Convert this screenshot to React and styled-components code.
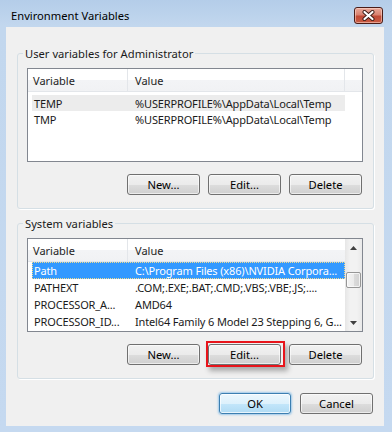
import React from "react";
import styled, { createGlobalStyle } from "styled-components";

const FONT = `"Noto Sans", "Open Sans", sans-serif`;

const Global = createGlobalStyle`
  html, body { margin: 0; padding: 0; background: #c4d9f0; }
  body { font-family: ${FONT}; font-size: 11px; color: #1a1a1a; }
  * { box-sizing: border-box; }
`;

const Frame = styled.div`
  width: 392px;
  height: 432px;
  display: flex;
  flex-direction: column;
  background: linear-gradient(180deg, #b4cde9 0px, #c2d7ee 26px, #c5d9f0 100%);
  overflow: hidden;
`;

const TitleBar = styled.div`
  height: 27px;
  flex: none;
  display: flex;
  align-items: center;
  justify-content: space-between;
  padding: 4px 9px 0 11px;
`;

const Title = styled.div`
  font-size: 11.2px;
  color: #000;
`;

const CloseButton = styled.div`
  width: 29px;
  height: 17px;
  border: 1px solid #4a1d18;
  border-radius: 3px;
  background: linear-gradient(180deg, #e9a99a 0%, #d98270 45%, #c14a36 55%, #c95d45 100%);
  box-shadow: inset 0 0 0 1px rgba(255, 220, 210, 0.55);
  display: flex;
  align-items: center;
  justify-content: center;
`;

const Client = styled.div`
  flex: 1;
  margin: 0 8px 6px 6px;
  background: #f0f0f0;
  padding: 0 10px 0 11px;
  display: flex;
  flex-direction: column;
`;

const Group = styled.fieldset`
  margin: ${(p) => p.$top}px 0 0;
  padding: 0;
  min-width: 0;
  border: 1px solid #d5dfe5;
  border-radius: 3px;
  box-shadow: 1px 1px 0 #fff;
`;

const Legend = styled.legend`
  margin-left: 5px;
  padding: 0 2px;
  line-height: 15px;
  font-size: 11.2px;
  color: #1a1a1a;
`;

const GroupBody = styled.div`
  padding: 7px 10px 13px 9px;
  display: flex;
  flex-direction: column;
`;

const List = styled.div`
  height: 94px;
  border: 1px solid #828790;
  background: #fff;
  display: flex;
  overflow: hidden;
`;

const ListMain = styled.div`
  flex: 1;
  display: flex;
  flex-direction: column;
  min-width: 0;
`;

const HeaderRow = styled.div`
  height: 23px;
  flex: none;
  display: flex;
  background: linear-gradient(180deg, #ffffff 0%, #ffffff 48%, #f3f4f6 52%, #f1f2f4 100%);
  border-bottom: 1px solid #e3e6ea;
`;

const HeaderCell = styled.div`
  width: ${(p) => (p.$w ? `${p.$w}px` : "auto")};
  flex: ${(p) => (p.$w ? "none" : "1")};
  padding-left: ${(p) => p.$pad || 0}px;
  border-right: ${(p) => (p.$last ? "none" : "1px solid #e3e6ea")};
  display: flex;
  align-items: center;
  font-size: 11px;
  color: #1e1e1e;
  white-space: nowrap;
`;

const Rows = styled.div`
  padding-top: ${(p) => p.$top}px;
  display: flex;
  flex-direction: column;
`;

const Row = styled.div`
  margin-left: 4px;
  width: 313px;
  height: ${(p) => p.$h}px;
  flex: none;
  display: flex;
  align-items: center;
  font-size: 11px;
  letter-spacing: -0.15px;
  color: ${(p) => (p.$state === "active" ? "#fff" : "#1a1a1a")};
  background: ${(p) =>
    p.$state === "active" ? "#3399ff" : p.$state === "inactive" ? "#ececec" : "transparent"};
  outline: ${(p) => (p.$state === "active" ? "1px dotted #f3dc8c" : "none")};
  outline-offset: -1px;
  white-space: nowrap;
`;

const Cell = styled.div`
  width: ${(p) => (p.$w ? `${p.$w}px` : "auto")};
  flex: ${(p) => (p.$w ? "none" : "1")};
  padding-left: ${(p) => p.$pad}px;
  overflow: hidden;
  white-space: nowrap;
`;

const ScrollBar = styled.div`
  width: 17px;
  flex: none;
  display: flex;
  flex-direction: column;
  background: linear-gradient(90deg, #e6e6e6 0%, #f2f2f2 30%, #f2f2f2 70%, #e9e9e9 100%);
`;

const ArrowButton = styled.div`
  height: 17px;
  flex: none;
  display: flex;
  align-items: center;
  justify-content: center;
`;

const Track = styled.div`
  flex: 1;
  display: flex;
  flex-direction: column;
  padding-top: ${(p) => p.$offset}px;
`;

const Thumb = styled.div`
  height: 16px;
  margin: 0 1px;
  border: 1px solid #979797;
  border-radius: 2px;
  background: linear-gradient(90deg, #f4f4f4 0%, #ececec 50%, #dcdcdc 51%, #d2d2d2 100%);
  box-shadow: inset 0 0 0 1px rgba(255, 255, 255, 0.7);
`;

const ButtonRow = styled.div`
  margin-top: ${(p) => p.$top}px;
  display: flex;
  justify-content: flex-end;
  gap: ${(p) => p.$gap}px;
  padding-right: 1px;
`;

const Button = styled.button`
  width: ${(p) => p.$w || 73}px;
  height: 21px;
  padding: 0;
  flex: none;
  border: 1px solid ${(p) => (p.$default ? "#3c7fb1" : "#707070")};
  border-radius: 3px;
  font-family: ${FONT};
  font-size: 11.2px;
  color: #000;
  background: ${(p) =>
    p.$default
      ? "linear-gradient(180deg, #ecf7fd 0%, #ddf1fc 50%, #c3e6fa 51%, #b0dbf4 100%)"
      : "linear-gradient(180deg, #f2f2f2 0%, #ebebeb 50%, #dddddd 51%, #cfcfcf 100%)"};
  box-shadow: ${(p) =>
    p.$default
      ? "inset 0 0 0 1px rgba(255,255,255,0.7), 0 0 2px 1px rgba(90,170,230,0.55)"
      : "inset 0 0 0 1px rgba(255,255,255,0.6)"};
`;

/* hand-drawn red annotation frame around a button */
const Highlight = styled.span`
  display: flex;
  margin: -3px -4px -2px -2px;
  padding: 1px 2px 0 0;
  border: 2px solid #e8141b;
  box-shadow: 3px 4px 5px rgba(0, 0, 0, 0.3);
`;

const Up = () => (
  <svg width="7" height="4" viewBox="0 0 7 4">
    <polygon points="0,4 7,4 3.5,0" fill="#404040" />
  </svg>
);
const Down = () => (
  <svg width="7" height="4" viewBox="0 0 7 4">
    <polygon points="0,0 7,0 3.5,4" fill="#404040" />
  </svg>
);

const CloseGlyph = () => (
  <svg width="13" height="11" viewBox="0 0 13 11">
    <path d="M2.5 2 L10.5 9 M10.5 2 L2.5 9" stroke="#3a1a14" strokeWidth="4" strokeLinecap="round" />
    <path d="M2.5 2 L10.5 9 M10.5 2 L2.5 9" stroke="#ffffff" strokeWidth="2.2" strokeLinecap="round" />
  </svg>
);

const userVars = [
  { name: "TEMP", value: "%USERPROFILE%\\AppData\\Local\\Temp", state: "inactive" },
  { name: "TMP", value: "%USERPROFILE%\\AppData\\Local\\Temp" },
];

const sysVars = [
  { name: "Path", value: "C:\\Program Files (x86)\\NVIDIA Corpora...", state: "active" },
  { name: "PATHEXT", value: ".COM;.EXE;.BAT;.CMD;.VBS;.VBE;.JS;...." },
  { name: "PROCESSOR_A...", value: "AMD64" },
  { name: "PROCESSOR_ID...", value: "Intel64 Family 6 Model 23 Stepping 6, G..." },
];

function VarList({ rows, rowHeight, rowTop, scroll }) {
  return (
    <List>
      <ListMain>
        <HeaderRow>
          <HeaderCell $w={100} $pad={5}>Variable</HeaderCell>
          <HeaderCell $w={217} $pad={7} $last={scroll}>Value</HeaderCell>
          {!scroll && <HeaderCell $last />}
        </HeaderRow>
        <Rows $top={rowTop}>
          {rows.map((r) => (
            <Row key={r.name} $h={rowHeight} $state={r.state}>
              <Cell $w={96} $pad={2}>{r.name}</Cell>
              <Cell $pad={7}>{r.value}</Cell>
            </Row>
          ))}
        </Rows>
      </ListMain>
      {scroll && (
        <ScrollBar>
          <ArrowButton><Up /></ArrowButton>
          <Track $offset={16}>
            <Thumb />
          </Track>
          <ArrowButton><Down /></ArrowButton>
        </ScrollBar>
      )}
    </List>
  );
}

export default function App() {
  return (
    <>
      <Global />
      <Frame>
        <TitleBar>
          <Title>Environment Variables</Title>
          <CloseButton>
            <CloseGlyph />
          </CloseButton>
        </TitleBar>
        <Client>
          <Group $top={19}>
            <Legend>User variables for Administrator</Legend>
            <GroupBody>
              <VarList rows={userVars} rowHeight={16} rowTop={3} />
              <ButtonRow $top={12} $gap={8}>
                <Button>New...</Button>
                <Button>Edit...</Button>
                <Button>Delete</Button>
              </ButtonRow>
            </GroupBody>
          </Group>
          <Group $top={7}>
            <Legend>System variables</Legend>
            <GroupBody>
              <VarList rows={sysVars} rowHeight={17} rowTop={0} scroll />
              <ButtonRow $top={12} $gap={8}>
                <Button>New...</Button>
                <Highlight>
                  <Button>Edit...</Button>
                </Highlight>
                <Button>Delete</Button>
              </ButtonRow>
            </GroupBody>
          </Group>
          <ButtonRow $top={14} $gap={9}>
            <Button $w={72} $default>OK</Button>
            <Button>Cancel</Button>
          </ButtonRow>
        </Client>
      </Frame>
    </>
  );
}
